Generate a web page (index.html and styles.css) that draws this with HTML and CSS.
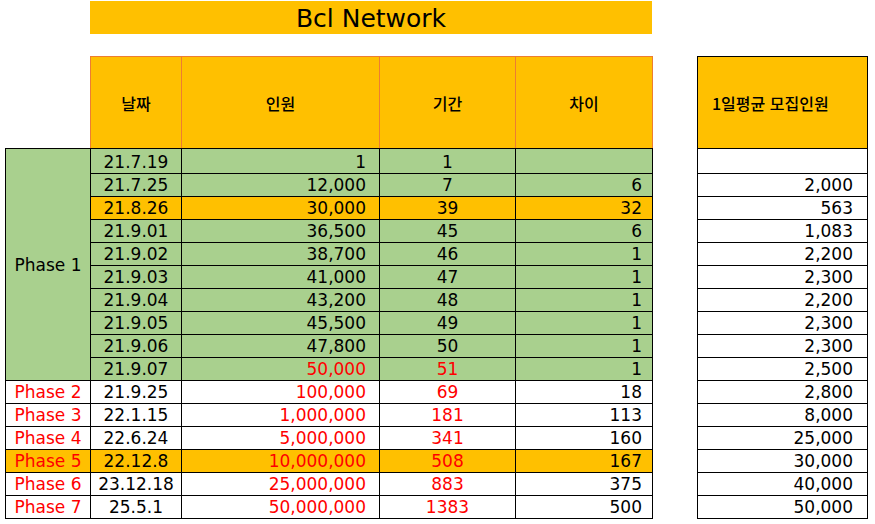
FILE: index.html
```html
<!DOCTYPE html>
<html lang="ko">
<head>
<meta charset="utf-8">
<title>Bcl Network</title>
<link rel="stylesheet" href="styles.css">
</head>
<body>
<div class="page">
  <div class="title">Bcl Network</div>
  <div class="tables">
    <table class="main">
      <colgroup>
        <col class="c-phase"><col class="c-date"><col class="c-people"><col class="c-days"><col class="c-diff">
      </colgroup>
      <thead>
        <tr class="head">
          <th class="blank"></th>
          <th>날짜</th>
          <th>인원</th>
          <th>기간</th>
          <th>차이</th>
        </tr>
      </thead>
      <tbody>
        <tr class="first green">
          <td class="phase green-cell" rowspan="10">Phase 1</td>
          <td class="date">21.7.19</td><td class="num">1</td><td class="mid">1</td><td class="diff"></td>
        </tr>
        <tr class="green"><td class="date">21.7.25</td><td class="num">12,000</td><td class="mid">7</td><td class="diff">6</td></tr>
        <tr class="gold"><td class="date">21.8.26</td><td class="num">30,000</td><td class="mid">39</td><td class="diff">32</td></tr>
        <tr class="green"><td class="date">21.9.01</td><td class="num">36,500</td><td class="mid">45</td><td class="diff">6</td></tr>
        <tr class="green"><td class="date">21.9.02</td><td class="num">38,700</td><td class="mid">46</td><td class="diff">1</td></tr>
        <tr class="green"><td class="date">21.9.03</td><td class="num">41,000</td><td class="mid">47</td><td class="diff">1</td></tr>
        <tr class="green"><td class="date">21.9.04</td><td class="num">43,200</td><td class="mid">48</td><td class="diff">1</td></tr>
        <tr class="green"><td class="date">21.9.05</td><td class="num">45,500</td><td class="mid">49</td><td class="diff">1</td></tr>
        <tr class="green"><td class="date">21.9.06</td><td class="num">47,800</td><td class="mid">50</td><td class="diff">1</td></tr>
        <tr class="green"><td class="date">21.9.07</td><td class="num red">50,000</td><td class="mid red">51</td><td class="diff">1</td></tr>
        <tr><td class="phase red">Phase 2</td><td class="date">21.9.25</td><td class="num red">100,000</td><td class="mid red">69</td><td class="diff">18</td></tr>
        <tr><td class="phase red">Phase 3</td><td class="date">22.1.15</td><td class="num red">1,000,000</td><td class="mid red">181</td><td class="diff">113</td></tr>
        <tr><td class="phase red">Phase 4</td><td class="date">22.6.24</td><td class="num red">5,000,000</td><td class="mid red">341</td><td class="diff">160</td></tr>
        <tr class="gold"><td class="phase red">Phase 5</td><td class="date">22.12.8</td><td class="num red">10,000,000</td><td class="mid red">508</td><td class="diff">167</td></tr>
        <tr><td class="phase red">Phase 6</td><td class="date">23.12.18</td><td class="num red">25,000,000</td><td class="mid red">883</td><td class="diff">375</td></tr>
        <tr><td class="phase red">Phase 7</td><td class="date">25.5.1</td><td class="num red">50,000,000</td><td class="mid red">1383</td><td class="diff">500</td></tr>
      </tbody>
    </table>

    <table class="side">
      <thead>
        <tr class="head"><th>1일평균 모집인원</th></tr>
      </thead>
      <tbody>
        <tr class="first"><td></td></tr>
        <tr><td>2,000</td></tr>
        <tr><td>563</td></tr>
        <tr><td>1,083</td></tr>
        <tr><td>2,200</td></tr>
        <tr><td>2,300</td></tr>
        <tr><td>2,200</td></tr>
        <tr><td>2,300</td></tr>
        <tr><td>2,300</td></tr>
        <tr><td>2,500</td></tr>
        <tr><td>2,800</td></tr>
        <tr><td>8,000</td></tr>
        <tr><td>25,000</td></tr>
        <tr><td>30,000</td></tr>
        <tr><td>40,000</td></tr>
        <tr><td>50,000</td></tr>
      </tbody>
    </table>
  </div>
</div>
</body>
</html>
```

FILE: styles.css
```css
html, body {
  margin: 0;
  padding: 0;
  background: #ffffff;
}

body {
  font-family: "DejaVu Sans", "Noto Sans CJK KR", sans-serif;
  color: #000000;
}

.page {
  padding-top: 1px;
}

.title {
  margin-left: 90px;
  width: 562px;
  height: 33px;
  background: #ffc000;
  font-size: 25px;
  line-height: 35px;
  text-align: center;
}

.tables {
  display: flex;
  align-items: flex-start;
  gap: 44px;
  margin-top: 22px;
  padding-left: 5px;
}

table {
  border-collapse: collapse;
  table-layout: fixed;
  font-size: 17px;
}

.main {
  width: 648px;
}

.side {
  width: 171px;
}

.c-phase { width: 85px; }
.c-date { width: 91px; }
.c-people { width: 198px; }
.c-days { width: 136px; }
.c-diff { width: 137px; }

th, td {
  padding: 0;
  white-space: nowrap;
  overflow: hidden;
}

td {
  border: 1px solid #000000;
  height: 22px;
  line-height: 22px;
  vertical-align: bottom;
}

tr.first td {
  height: 24px;
}

.head th {
  height: 91px;
  background: #ffc000;
  font-family: "Noto Sans CJK KR", "DejaVu Sans", sans-serif;
  font-size: 16px;
  font-weight: 500;
  text-align: center;
  border: 1px solid #ed7d31;
  border-bottom-color: #000000;
}

.head th.blank {
  background: transparent;
  border: none;
  border-bottom: 1px solid #000000;
}

.side .head th {
  border-color: #000000;
  text-align: left;
  padding-left: 14px;
}

.side td {
  text-align: right;
  padding-right: 14px;
}

tr.green td { background: #a9d08e; }
tr.gold td { background: #ffc000; }
td.green-cell { background: #a9d08e; }

.phase {
  text-align: center;
  vertical-align: middle;
}

.date { text-align: center; }
.num { text-align: right; padding-right: 13px; }
.mid { text-align: center; }
.diff { text-align: right; padding-right: 10px; }

.red { color: #ff0000; }
```
